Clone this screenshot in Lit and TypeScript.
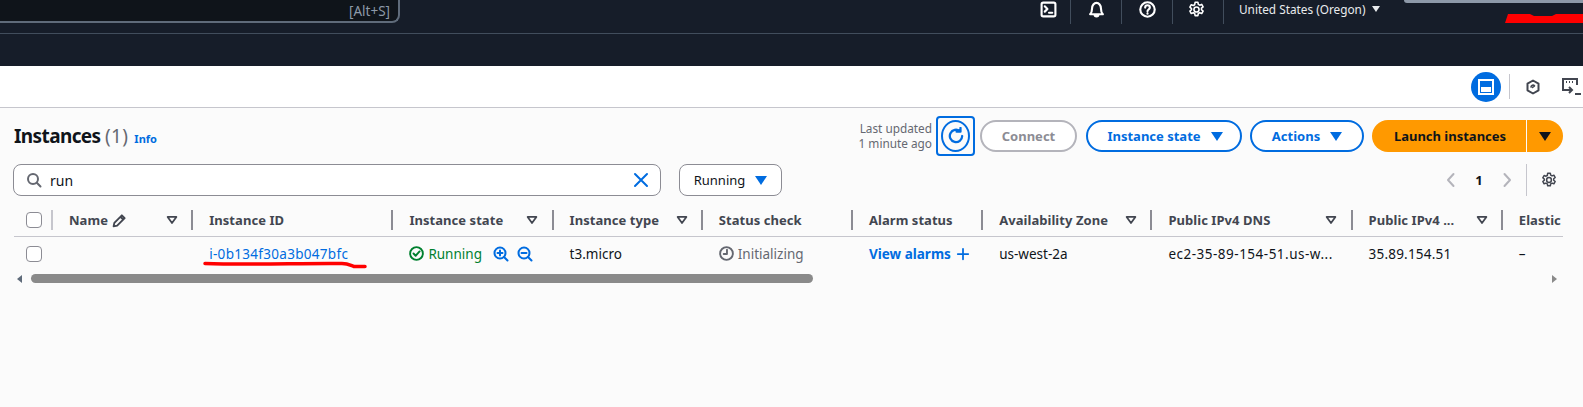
import { LitElement, html, css, svg } from "lit";
import { customElement } from "lit/decorators.js";

const icon = (size: number, body: unknown, cls = "") => html`
  <svg class="ic ${cls}" width=${size} height=${size} viewBox="0 0 16 16" fill="none" stroke="currentColor" stroke-width="2" stroke-linejoin="round" stroke-linecap="round">${body}</svg>
`;

const gear = svg`<g stroke-width="1.5"><path d="M6.7 1.2h2.6l.4 2 1.3.7 1.9-.7 1.3 2.3-1.5 1.3v1.4l1.5 1.3-1.3 2.3-1.9-.7-1.3.7-.4 2H6.7l-.4-2-1.3-.7-1.9.7-1.3-2.3 1.5-1.3V7.1L1.8 5.8l1.3-2.3 1.9.7 1.3-.7z"/><circle cx="8" cy="8" r="2.4"/></g>`;
const sortCaret = svg`<path d="M3 4.5h10L8 11.5z"/>`;

const columns = [
  { label: "Name", width: 140, sort: true, edit: true },
  { label: "Instance ID", width: 200 },
  { label: "Instance state", width: 160, sort: true },
  { label: "Instance type", width: 149, sort: true },
  { label: "Status check", width: 150 },
  { label: "Alarm status", width: 130 },
  { label: "Availability Zone", width: 169, sort: true },
  { label: "Public IPv4 DNS", width: 200, sort: true },
  { label: "Public IPv4 ...", width: 150, sort: true },
  { label: "Elastic", width: 62 },
];

@customElement("app-root")
export class AppRoot extends LitElement {
  static styles = css`
    :host {
      display: block;
      position: relative;
      height: 407px;
      overflow: hidden;
      background: #fbfbfb;
      color: #0f141a;
      font-family: "Noto Sans", "Open Sans", sans-serif;
      font-size: 13px;
    }
    .ic { display: block; flex: none; }

    .topnav {
      display: flex;
      background: #161d29;
      border-bottom: 1px solid #414d5c;
      box-sizing: border-box;
      height: 34px;
      color: #fff;
    }
    .search-global {
      width: 402px;
      height: 23px;
      box-sizing: border-box;
      margin-left: -2px;
      background: #0f141a;
      border: 2px solid #5f6b7a;
      border-top: 0;
      border-radius: 0 0 8px 0;
      display: flex;
      justify-content: flex-end;
      align-items: center;
      padding-right: 8px;
      color: #8d99a8;
      font-size: 13.5px;
    }
    .nav-icons {
      display: flex;
      margin-left: 621px;
      height: 24px;
    }
    .nav-icon {
      width: 50px;
      display: flex;
      align-items: center;
      justify-content: center;
      border-right: 1px solid #414d5c;
      padding-bottom: 6px;
      box-sizing: content-box;
      height: 18px;
    }
    .nav-icon.first { width: 43px; padding-left: 6px; }
    .nav-icon.cog { width: 46px; padding-right: 4px; }
    .region {
      margin-left: 15px;
      display: flex;
      align-items: center;
      gap: 7px;
      height: 18px;
      font-size: 11.8px;
      color: #e9ebed;
      white-space: nowrap;
    }
    .caret-sm { width: 0; height: 0; border-left: 4px solid transparent; border-right: 4px solid transparent; border-top: 6px solid #e9ebed; }
    .subnav { height: 32px; background: #161d29; }

    .toolstrip {
      height: 41px;
      background: #fff;
      border-bottom: 1px solid #c6c6cd;
      display: flex;
      align-items: center;
      padding-left: 1471px;
    }
    .tool-active {
      width: 30px;
      height: 30px;
      border-radius: 50%;
      background: #006ce0;
      display: flex;
      align-items: center;
      justify-content: center;
      flex: none;
      color: #fff;
    }
    .tool-sep { width: 1px; height: 25px; background: #c6c6cd; margin: 0 15px 0 8px; flex: none; }
    .tool-2 { margin-right: 21px; color: #424650; }
    .tool-3 { color: #424650; }

    .header {
      display: flex;
      justify-content: space-between;
      align-items: center;
      height: 40px;
      margin-top: 8px;
      padding: 0 20px 0 14px;
    }
    .title { display: flex; align-items: baseline; gap: 6px; }
    h1 { margin: 0; font-size: 19px; font-weight: 700; line-height: 24px; letter-spacing: -0.6px; }
    h1 span { font-weight: 400; color: #656871; letter-spacing: 0.4px; }
    .info { font-size: 11px; font-weight: 700; color: #006ce0; }
    .actions { display: flex; align-items: center; }
    .updated { text-align: right; font-size: 11.8px; line-height: 15px; color: #656871; margin-right: 4px; white-space: nowrap; }
    .refresh-focus {
      width: 39px;
      height: 40px;
      box-sizing: border-box;
      border: 2px solid #006ce0;
      border-radius: 4px;
      display: flex;
      align-items: center;
      justify-content: center;
      margin-right: 5px;
      color: #006ce0;
    }
    .refresh { width: 29px; height: 32px; border: 2px solid #006ce0; border-radius: 50%; box-sizing: border-box; display: flex; align-items: center; justify-content: center; }
    .btn {
      height: 32px;
      box-sizing: border-box;
      border: 2px solid #006ce0;
      border-radius: 16px;
      background: #fff;
      color: #006ce0;
      font-family: inherit;
      font-size: 13px;
      font-weight: 700;
      display: flex;
      align-items: center;
      justify-content: center;
      gap: 10px;
      margin-right: 8px;
      padding: 0;
    }
    .btn.connect { width: 97px; border-color: #b4b4bb; color: #8c8c94; margin-right: 9px; }
    .btn.state { width: 156px; padding-left: 2px; }
    .btn.acts { width: 114px; }
    .tri { width: 0; height: 0; border-left: 6px solid transparent; border-right: 6px solid transparent; border-top: 9px solid currentColor; }
    .launch { display: flex; }
    .launch div {
      height: 32px;
      background: #ff9900;
      color: #0f141a;
      font-weight: 700;
      display: flex;
      align-items: center;
      justify-content: center;
    }
    .launch .main { width: 154px; border-radius: 16px 0 0 16px; padding-left: 2px; box-sizing: border-box; }
    .launch .more { width: 36px; margin-left: 1px; border-radius: 0 16px 16px 0; }

    .filters {
      display: flex;
      height: 32px;
      margin-top: 8px;
      padding-left: 13px;
      align-items: center;
    }
    .searchbox {
      width: 648px;
      height: 32px;
      box-sizing: border-box;
      border: 1px solid #8c8c94;
      border-radius: 8px;
      background: #fff;
      display: flex;
      align-items: center;
      padding: 0 11px 0 12px;
      color: #656871;
    }
    .searchbox .q { flex: 1; margin-left: 8px; color: #0f141a; font-size: 14px; }
    .searchbox .clear { color: #006ce0; }
    .running {
      width: 103px;
      height: 32px;
      box-sizing: border-box;
      border: 1px solid #8c8c94;
      border-radius: 8px;
      background: #fff;
      margin-left: 18px;
      display: flex;
      align-items: center;
      justify-content: center;
      gap: 10px;
    }
    .running .tri { color: #006ce0; }
    .pager {
      display: flex;
      align-items: center;
      margin-left: auto;
      padding-right: 26px;
      height: 32px;
    }
    .pager .chev { color: #b4b4bb; }
    .pager .num { width: 40px; text-align: center; font-weight: 700; font-size: 13px; }
    .pager .sep { width: 1px; height: 32px; background: #c6c6cd; margin: 0 14px 0 11px; }
    .pager .cog { color: #424650; }

    .table { margin: 8px 20px 0 14px; width: 1549px; overflow: hidden; }
    .row { display: grid; grid-template-columns: 37px repeat(10, auto); align-items: center; }
    .head { height: 32px; border-bottom: 1px solid #c6c6cd; color: #424650; font-weight: 700; letter-spacing: 0.05px; }
    .body { height: 33px; font-size: 13.5px; }
    .box {
      width: 16px;
      height: 16px;
      box-sizing: border-box;
      margin-left: 12px;
      border: 1px solid #8c8c94;
      border-radius: 4px;
      background: #fff;
    }
    .hcell {
      display: flex;
      align-items: center;
      height: 20px;
      border-left: 2px solid #8c8c94;
      padding: 0 12px 0 16px;
      box-sizing: border-box;
      white-space: nowrap;
      overflow: hidden;
    }
    .hcell.light { border-left-color: #c6c6cd; }
    .hcell .pencil { margin-left: 4px; }
    .hcell .sort { margin-left: auto; }
    .cell {
      padding-left: 18px;
      white-space: nowrap;
      overflow: hidden;
      display: flex;
      align-items: center;
      box-sizing: border-box;
    }
    .link { color: #006ce0; }
    .ok { color: #00802f; display: flex; align-items: center; gap: 4px; }
    .zoom-icons { display: flex; gap: 8px; margin-left: 11px; }
    .muted { color: #656871; gap: 4px; }
    .alarms { font-weight: 700; gap: 5px; }
    .id { letter-spacing: 0.3px; }
    .dns { letter-spacing: 0.5px; }
    .ip { letter-spacing: 0.2px; }

    .scroll { display: flex; align-items: center; height: 9px; margin: 4px 0 0 17px; }
    .scroll .thumb { width: 782px; height: 9px; border-radius: 5px; background: #8a8a8a; margin-left: 9px; }
    .scroll .a { width: 0; height: 0; border-top: 4px solid transparent; border-bottom: 4px solid transparent; }
    .scroll .l { border-right: 5px solid #5f6b7a; }
    .scroll .r { border-left: 5px solid #8a8a8a; margin-left: 739px; }

    .scribble { position: absolute; pointer-events: none; }
    .scribble-name { left: 1503px; top: 13px; }
    .scribble-id { left: 202px; top: 260px; }
    .graybar { position: absolute; left: 1404px; top: 0; width: 179px; height: 3px; background: #8d99a8; border-radius: 0 0 0 4px; }
  `;

  private header(c: (typeof columns)[number], i: number) {
    return html`
      <div class="hcell ${i === 0 ? "light" : ""}" style="width:${c.width}px">
        ${c.label}
        ${c.edit
          ? html`<span class="pencil">${icon(15, svg`<path d="M10.5 2.5l3 3L5.5 13.5l-3.8.8.8-3.8zM9 4l3 3"/>`)}</span>`
          : ""}
        ${c.sort ? html`<span class="sort">${icon(14, sortCaret)}</span>` : ""}
      </div>
    `;
  }

  render() {
    return html`
      <div class="topnav">
        <div class="search-global">[Alt+S]</div>
        <div class="nav-icons">
          <div class="nav-icon first">${icon(17, svg`<rect x="1.5" y="1.5" width="13" height="13" rx="1.5"/><path d="M4.5 5l2.5 2.5L4.5 10M8.5 11h3"/>`)}</div>
          <div class="nav-icon">${icon(17, svg`<path d="M2 12.5c1.5-1.5 1.8-3 1.8-5.5 0-3 2-5.2 4.2-5.2S12.2 4 12.2 7c0 2.5.3 4 1.8 5.5zM6.2 12.5c0 1.2.8 2 1.8 2s1.8-.8 1.8-2"/>`)}</div>
          <div class="nav-icon">${icon(17, svg`<circle cx="8" cy="8" r="6.8"/><path d="M5.8 6.2C5.8 4.9 6.8 4 8 4s2.2.9 2.2 2.1c0 1.8-2.2 1.9-2.2 3.5M8 11.6v.4"/>`)}</div>
          <div class="nav-icon cog">${icon(17, gear)}</div>
        </div>
        <div class="region">United States (Oregon) <span class="caret-sm"></span></div>
      </div>
      <div class="subnav"></div>

      <div class="toolstrip">
        <div class="tool-active">
          <svg width="16" height="16" viewBox="0 0 16 16" class="ic" fill="none"><rect x="1" y="1" width="14" height="14" stroke="#fff" stroke-width="2"/><rect x="3" y="8" width="10" height="5" fill="#fff"/></svg>
        </div>
        <div class="tool-sep"></div>
        <div class="tool-2">${icon(16, svg`<path d="M8 1.5l5.5 3.2v6.6L8 14.5l-5.5-3.2V4.7z"/><path d="M6 8a2 2 0 0 1 3.5-1.2L7.5 8.5" stroke-width="1.6"/>`)}</div>
        <div class="tool-3">
          <svg width="20" height="18" viewBox="0 0 20 18" class="ic" fill="none" stroke="currentColor" stroke-width="2"><path d="M7 12H1V1h14v6"/><path d="M4 4h1M7 4h1M10 4h1" /><path d="M7 9l3 3-3 3M3 12h6M13 16h6"/></svg>
        </div>
      </div>

      <div class="header">
        <div class="title"><h1>Instances <span>(1)</span></h1><span class="info">Info</span></div>
        <div class="actions">
          <div class="updated">Last updated<br />1 minute ago</div>
          <div class="refresh-focus">
            <div class="refresh">${icon(18, svg`<path d="M13.5 8a5.5 5.5 0 1 1-2-4.3M12 .8v3.4H8.5"/>`)}</div>
          </div>
          <button class="btn connect">Connect</button>
          <button class="btn state">Instance state <span class="tri"></span></button>
          <button class="btn acts">Actions <span class="tri"></span></button>
          <div class="launch">
            <div class="main">Launch instances</div>
            <div class="more"><span class="tri"></span></div>
          </div>
        </div>
      </div>

      <div class="filters">
        <div class="searchbox">
          ${icon(16, svg`<circle cx="7" cy="7" r="5"/><path d="M10.8 10.8L14.5 14.5"/>`)}
          <span class="q">run</span>
          <span class="clear">${icon(16, svg`<path d="M2 2l12 12M14 2L2 14"/>`)}</span>
        </div>
        <div class="running">Running <span class="tri"></span></div>
        <div class="pager">
          <span class="chev">${icon(16, svg`<path d="M10.5 2L5 8l5.5 6"/>`)}</span>
          <span class="num">1</span>
          <span class="chev">${icon(16, svg`<path d="M5.5 2l5.5 6-5.5 6"/>`)}</span>
          <span class="sep"></span>
          <span class="cog">${icon(16, gear)}</span>
        </div>
      </div>

      <div class="table">
        <div class="row head">
          <div class="box"></div>
          ${columns.map((c, i) => this.header(c, i))}
        </div>
        <div class="row body">
          <div class="box"></div>
          <div class="cell" style="width:140px"></div>
          <div class="cell link id" style="width:200px">i-0b134f30a3b047bfc</div>
          <div class="cell" style="width:160px">
            <span class="ok">
              ${icon(15, svg`<circle cx="8" cy="8" r="6.8"/><path d="M4.8 8l2.3 2.4 4.2-4.6"/>`)} Running
            </span>
            <span class="link zoom-icons">
              ${icon(16, svg`<circle cx="7" cy="7" r="5.5"/><path d="M11 11l3.5 3.5M4.5 7h5M7 4.5v5"/>`)}
              ${icon(16, svg`<circle cx="7" cy="7" r="5.5"/><path d="M11 11l3.5 3.5M4.5 7h5"/>`)}
            </span>
          </div>
          <div class="cell" style="width:149px">t3.micro</div>
          <div class="cell muted" style="width:150px">
            ${icon(15, svg`<circle cx="8" cy="8" r="6.8"/><path d="M8.5 4v4.5H5"/>`)} Initializing
          </div>
          <div class="cell link alarms" style="width:130px">
            View alarms ${icon(14, svg`<path d="M8 2v12M2 8h12"/>`)}
          </div>
          <div class="cell" style="width:169px">us-west-2a</div>
          <div class="cell dns" style="width:200px">ec2-35-89-154-51.us-w...</div>
          <div class="cell ip" style="width:150px">35.89.154.51</div>
          <div class="cell" style="width:62px">–</div>
        </div>
      </div>

      <div class="scroll">
        <span class="a l"></span>
        <span class="thumb"></span>
        <span class="a r"></span>
      </div>

      <div class="graybar"></div>
      <svg class="scribble scribble-name" width="80" height="11" viewBox="0 0 80 11">
        <path d="M2 10L5 1h22l4 2h18l4-2h27v9z" fill="#f00"/>
      </svg>
      <svg class="scribble scribble-id" width="168" height="10" viewBox="0 0 168 10" fill="none">
        <path d="M3 3.5C50 5 100 3 140 3.5c6 0 9 2 12 3h11" stroke="#f00" stroke-width="3.5" stroke-linecap="round"/>
      </svg>
    `;
  }
}
